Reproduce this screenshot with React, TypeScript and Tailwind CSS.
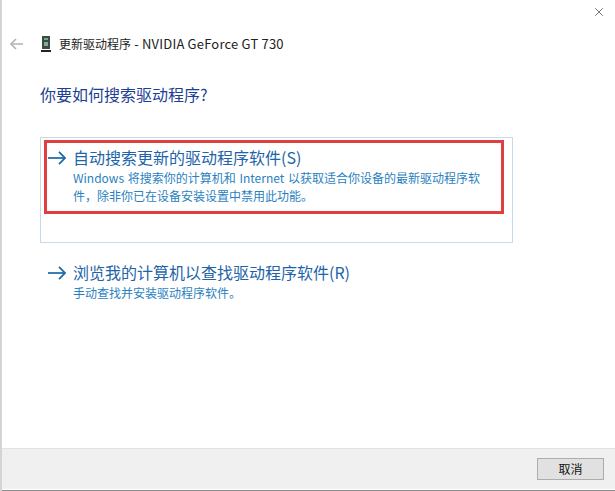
import { X } from 'lucide-react';

const font = { fontFamily: '"Noto Sans CJK SC", "Segoe UI", "Open Sans", sans-serif' };

function LinkArrow() {
  return (
    <svg width="18" height="14" viewBox="0 0 18 14" fill="none" stroke="#1a66a8" strokeWidth="1.7" className="shrink-0 mt-[2px]">
      <path d="M0 7H17" />
      <path d="M11 0.8L17 7L11 13.2" />
    </svg>
  );
}

function GpuIcon() {
  return (
    <svg width="10" height="16" viewBox="0 0 10 16" className="shrink-0">
      <rect x="1" y="0" width="8" height="13" fill="#3c4a44" />
      <rect x="3" y="2" width="4" height="2" fill="#5fb588" />
      <rect x="3" y="6" width="4" height="4" fill="#8fa39a" />
      <rect x="0" y="14" width="10" height="2" fill="#222" />
    </svg>
  );
}

export default function App() {
  return (
    <div
      style={font}
      className="w-[615px] h-[491px] bg-white flex flex-col border-l-2 border-[#d4d4d4] overflow-hidden relative"
    >
      <div className="h-[33px] shrink-0 flex justify-end items-start pt-[5px] pr-[9px]">
        <X size={14} strokeWidth={1} color="#111" />
      </div>

      <div className="flex-1 flex flex-col">
        <div className="flex items-center h-[22px] pl-[8px]">
          <svg width="13" height="12" viewBox="0 0 13 12" fill="none" stroke="#b5b5b5" strokeWidth="1.6" className="shrink-0">
            <path d="M13 6H1" />
            <path d="M6 1L1 6L6 11" />
          </svg>
          <div className="ml-[18px]">
            <GpuIcon />
          </div>
          <span className="ml-[8px] text-[12px] leading-[22px] text-[#222] whitespace-nowrap">
            更新驱动程序<span className="text-[13px] tracking-[0.2px]"> - NVIDIA GeForce GT 730</span>
          </span>
        </div>

        <h1 className="mt-[27px] ml-[38px] text-[16px] leading-[24px] font-normal text-[#1c3f94] whitespace-nowrap">你要如何搜索驱动程序?</h1>

        <div className="mt-[31px] ml-[38px] w-[473px] h-[106px] border border-[#c5dbe9] pt-[2px] pl-[3px] shrink-0">
          <div className="w-[460px] h-[74px] border-[3px] border-[#e03f3f] pl-[1px] pt-[2px]">
            <div className="flex items-center h-[24px] gap-[7px]">
              <LinkArrow />
              <span className="text-[16px] leading-[24px] text-[#1d64a8] whitespace-nowrap">自动搜索更新的驱动程序软件(S)</span>
            </div>
            <p className="ml-[25px] text-[12px] leading-[18px] text-[#2a7fc0] [word-spacing:1px]">
              <span className="block whitespace-nowrap">Windows 将搜索你的计算机和 Internet 以获取适合你设备的最新驱动程序软</span>
              <span className="block whitespace-nowrap">{'件\uFF0C除非你已在设备安装设置中禁用此功能。'}</span>
            </p>
          </div>
        </div>

        <div className="mt-[17px] ml-[46px]">
          <div className="flex items-center h-[24px] gap-[7px]">
            <LinkArrow />
            <span className="text-[16px] leading-[24px] text-[#1d64a8] whitespace-nowrap">浏览我的计算机以查找驱动程序软件(R)</span>
          </div>
          <p className="ml-[25px] text-[12px] leading-[18px] text-[#2a7fc0] whitespace-nowrap">手动查找并安装驱动程序软件。</p>
        </div>
      </div>

      <div className="h-[41px] shrink-0 bg-[#f0f0f0] border-t border-[#e2e2e2] flex justify-end items-start pt-[9px] pr-[11px]">
        <button className="w-[67px] h-[22px] bg-[#e1e1e1] border border-[#adadad] text-[12px] leading-[18px] text-[#111]">取消</button>
      </div>
      <div className="h-[1px] shrink-0 bg-white" />
      <div className="h-[1px] shrink-0 bg-[#8a8a8a]" />
    </div>
  );
}
